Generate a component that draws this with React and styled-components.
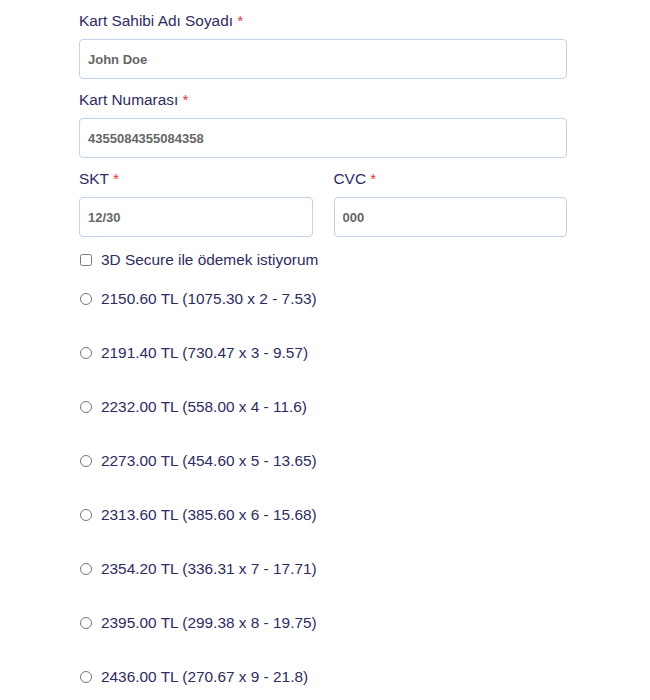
import React from "react";
import styled, { createGlobalStyle } from "styled-components";

const GlobalStyle = createGlobalStyle`
  body {
    margin: 0;
    background: #fff;
    font-family: "Liberation Sans", Arial, sans-serif;
  }
`;

const Form = styled.form`
  width: 488px;
  padding: 11px 0 0 79px;
`;

const Group = styled.div`
  margin-bottom: 11px;
`;

const Row = styled.div`
  display: flex;
  gap: 21px;
  & > div {
    flex: 1;
  }
`;

const Label = styled.label`
  display: block;
  font-size: 15.4px;
  line-height: 20px;
  color: #2f2b5f;
  margin-bottom: 8px;
`;

const Req = styled.span`
  color: #e0393e;
`;

const Input = styled.input`
  box-sizing: border-box;
  width: 100%;
  height: 40px;
  padding: 0 8px;
  border: 1px solid #c3d1e6;
  border-radius: 4px;
  font-family: "Liberation Sans", Arial, sans-serif;
  font-size: 13px;
  font-weight: bold;
  color: #666;
  outline: none;
`;

const Option = styled.label`
  display: flex;
  align-items: center;
  height: 20px;
  font-size: 15.4px;
  color: #2f2b5f;
  margin-top: ${(p) => p.top || 0}px;
  margin-bottom: ${(p) => (p.gap ? p.gap : 34)}px;
  input {
    margin: 0 9px 0 1px;
    width: 12px;
    height: 12px;
  }
`;

const installments = [
  ["2150.60", "1075.30", 2, "7.53"],
  ["2191.40", "730.47", 3, "9.57"],
  ["2232.00", "558.00", 4, "11.6"],
  ["2273.00", "454.60", 5, "13.65"],
  ["2313.60", "385.60", 6, "15.68"],
  ["2354.20", "336.31", 7, "17.71"],
  ["2395.00", "299.38", 8, "19.75"],
  ["2436.00", "270.67", 9, "21.8"],
];

export default function App() {
  return (
    <>
      <GlobalStyle />
      <Form>
        <Group>
          <Label>
            Kart Sahibi Adı Soyadı <Req>*</Req>
          </Label>
          <Input defaultValue="John Doe" />
        </Group>
        <Group>
          <Label>
            Kart Numarası <Req>*</Req>
          </Label>
          <Input defaultValue="4355084355084358" />
        </Group>
        <Row>
          <Group>
            <Label>
              SKT <Req>*</Req>
            </Label>
            <Input defaultValue="12/30" />
          </Group>
          <Group>
            <Label>
              CVC <Req>*</Req>
            </Label>
            <Input defaultValue="000" />
          </Group>
        </Row>
        <Option top={2} gap={19}>
          <input type="checkbox" />
          3D Secure ile ödemek istiyorum
        </Option>
        {installments.map(([total, per, n, fee]) => (
          <Option key={n}>
            <input type="radio" name="installment" />
            {total} TL ({per} x {n} - {fee})
          </Option>
        ))}
      </Form>
    </>
  );
}
